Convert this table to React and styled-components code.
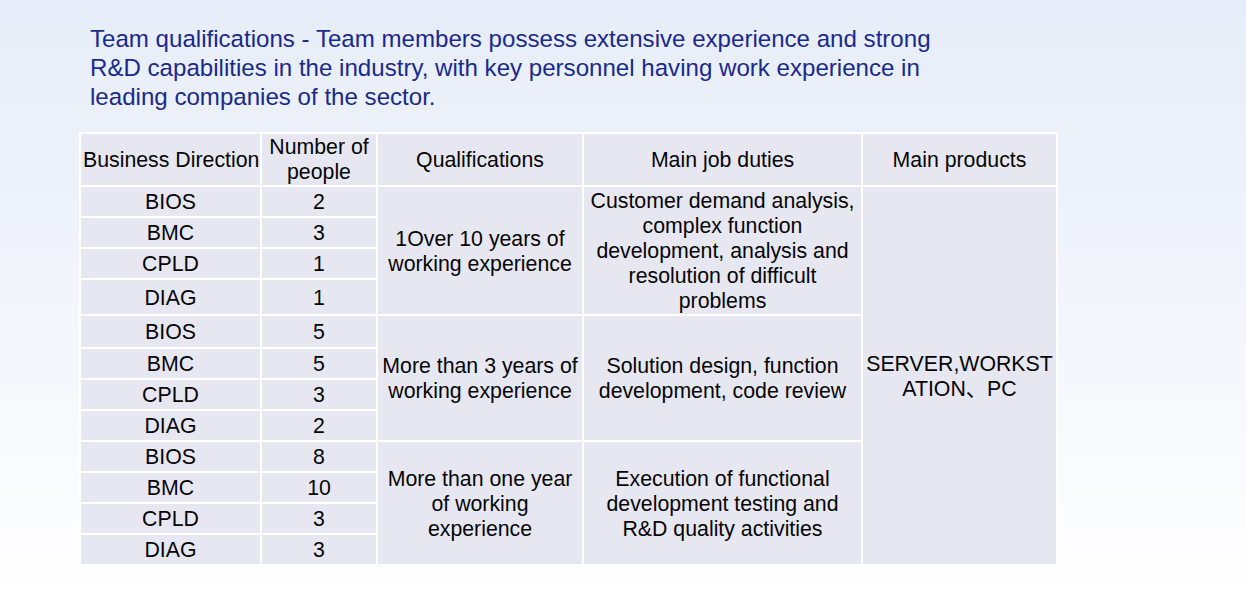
import React from "react";
import styled, { createGlobalStyle } from "styled-components";

const Global = createGlobalStyle`
  html, body { margin: 0; padding: 0; }
  body {
    font-family: "Liberation Sans", Arial, "Noto Sans CJK SC", sans-serif;
    background: #ffffff;
  }
`;

const Page = styled.div`
  width: 1246px;
  height: 599px;
  box-sizing: border-box;
  padding: 24px 0 0 79px;
  background: linear-gradient(180deg, #e7edf8 0%, #eef2fa 35%, #f8f9fd 70%, #ffffff 100%);
  overflow: hidden;
`;

const Title = styled.h1`
  margin: 0 0 21px 11px;
  font-size: 24.1px;
  line-height: 29px;
  font-weight: 400;
  color: #1a2a8c;
`;

const Table = styled.table`
  width: 979px;
  table-layout: fixed;
  border-collapse: separate;
  border-spacing: 2px;
  background: #ffffff;
  font-size: 21.3px;
  line-height: 25px;
  color: #050505;
`;

const Row = styled.tr`
  height: ${(p) => p.$h}px;
`;

const Cell = styled.td`
  background: #e7e7f1;
  padding: 2px 2px 0;
  text-align: center;
  vertical-align: middle;
  white-space: nowrap;
  overflow: visible;
`;

const HeadCell = styled(Cell).attrs({ as: "th" })`
  font-weight: 400;
  padding: 1px 2px 0;
`;

const columns = [179, 114, 204, 277, 193];

const groups = [
  {
    rows: [
      ["BIOS", "2"],
      ["BMC", "3"],
      ["CPLD", "1"],
      ["DIAG", "1"],
    ],
    heights: [29, 29, 29, 34],
    qual: ["1Over 10 years of", "working experience"],
    duties: [
      "Customer demand analysis,",
      "complex function",
      "development, analysis and",
      "resolution of difficult",
      "problems",
    ],
  },
  {
    rows: [
      ["BIOS", "5"],
      ["BMC", "5"],
      ["CPLD", "3"],
      ["DIAG", "2"],
    ],
    heights: [31, 29, 29, 29],
    qual: ["More than 3 years of", "working experience"],
    duties: ["Solution design, function", "development, code review"],
  },
  {
    rows: [
      ["BIOS", "8"],
      ["BMC", "10"],
      ["CPLD", "3"],
      ["DIAG", "3"],
    ],
    heights: [29, 29, 29, 29],
    qual: ["More than one year", "of working", "experience"],
    duties: [
      "Execution of functional",
      "development testing and",
      "R&D quality activities",
    ],
  },
];

const Lines = ({ lines }) =>
  lines.map((l, i) => (
    <React.Fragment key={i}>
      {i > 0 && <br />}
      {l}
    </React.Fragment>
  ));

export default function App() {
  return (
    <>
      <Global />
      <Page>
        <Title>
          Team qualifications - Team members possess extensive experience and strong
          <br />
          R&amp;D capabilities in the industry, with key personnel having work experience in
          <br />
          leading companies of the sector.
        </Title>
        <Table>
          <colgroup>
            {columns.map((w, i) => (
              <col key={i} style={{ width: w }} />
            ))}
          </colgroup>
          <thead>
            <Row $h={51}>
              <HeadCell>Business Direction</HeadCell>
              <HeadCell>
                Number of
                <br />
                people
              </HeadCell>
              <HeadCell>Qualifications</HeadCell>
              <HeadCell>Main job duties</HeadCell>
              <HeadCell>Main products</HeadCell>
            </Row>
          </thead>
          <tbody>
            {groups.map((g, gi) =>
              g.rows.map((r, ri) => (
                <Row key={`${gi}-${ri}`} $h={g.heights[ri]}>
                  <Cell>{r[0]}</Cell>
                  <Cell>{r[1]}</Cell>
                  {ri === 0 && (
                    <Cell rowSpan={4}>
                      <Lines lines={g.qual} />
                    </Cell>
                  )}
                  {ri === 0 && (
                    <Cell rowSpan={4}>
                      <Lines lines={g.duties} />
                    </Cell>
                  )}
                  {gi === 0 && ri === 0 && (
                    <Cell rowSpan={12}>
                      <Lines lines={["SERVER,WORKST", "ATION、PC"]} />
                    </Cell>
                  )}
                </Row>
              ))
            )}
          </tbody>
        </Table>
      </Page>
    </>
  );
}
